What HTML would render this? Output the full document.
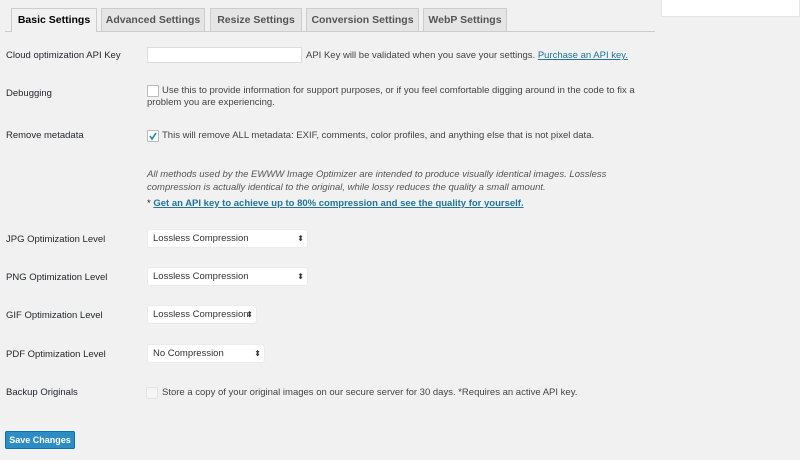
<!DOCTYPE html>
<html><head><style>
body{margin:0;width:800px;height:460px;background:#f1f1f1;font-family:"Liberation Sans",sans-serif;font-size:9.5px;color:#444;position:relative;overflow:hidden}
.a{position:absolute;white-space:nowrap}
.tab{position:absolute;top:8px;height:23px;box-sizing:border-box;border:1px solid #ccc;border-bottom:none;background:#e5e5e5;font-weight:bold;font-size:10.5px;color:#555;text-align:center;line-height:23px}
.tab.on{background:#f1f1f1;color:#000;height:24px}
.lbl{position:absolute;left:6px;font-size:9.5px;color:#23282d}
.sel{position:absolute;left:148px;height:17px;background:#fff;border-radius:2px;box-shadow:0 0 1px #ccc;box-sizing:border-box;padding-left:5px;line-height:18px;font-size:9.5px;color:#333}
.sel:after{content:"⬍";position:absolute;right:3px;top:0;font-size:8px;color:#333}
.cb{position:absolute;width:10px;height:10px;border:1px solid #bbb;background:#fff;border-radius:1px;left:147px}
</style></head><body>
<div class="a" style="left:661px;top:0;width:137px;height:16px;background:#fff;border:1px solid #e5e5e5;border-top:none"></div>
<div class="a" style="left:5px;top:31px;width:650px;height:1px;background:#ccc"></div>
<div class="tab on" style="left:11px;width:86px">Basic Settings</div>
<div class="tab" style="left:101px;width:104px">Advanced Settings</div>
<div class="tab" style="left:210px;width:92px">Resize Settings</div>
<div class="tab" style="left:306px;width:113px">Conversion Settings</div>
<div class="tab" style="left:423px;width:84px">WebP Settings</div>

<div class="lbl" style="top:50px">Cloud optimization API Key</div>
<div class="a" style="left:147px;top:47px;width:155px;height:16px;background:#fff;border:1px solid #ddd;box-sizing:border-box"></div>
<div class="a" style="left:306px;top:50px">API Key will be validated when you save your settings. <span style="color:#21759b;text-decoration:underline">Purchase an API key.</span></div>

<div class="lbl" style="top:88px">Debugging</div>
<div class="cb" style="top:85px"></div>
<div class="a" style="left:162px;top:85px">Use this to provide information for support purposes, or if you feel comfortable digging around in the code to fix a</div>
<div class="a" style="left:147px;top:97px">problem you are experiencing.</div>

<div class="lbl" style="top:130px">Remove metadata</div>
<div class="cb" style="top:130px"><svg width="10" height="10" style="position:absolute;left:0;top:0"><path d="M2 5 L4 8 L8 2" stroke="#1e8cbe" stroke-width="1.6" fill="none"/></svg></div>
<div class="a" style="left:162px;top:130px">This will remove ALL metadata: EXIF, comments, color profiles, and anything else that is not pixel data.</div>

<div class="a" style="left:147px;top:169px;font-style:italic;color:#555">All methods used by the EWWW Image Optimizer are intended to produce visually identical images. Lossless</div>
<div class="a" style="left:147px;top:182px;font-style:italic;color:#555">compression is actually identical to the original, while lossy reduces the quality a small amount.</div>
<div class="a" style="left:147px;top:198px;color:#222">* <b style="color:#21759b;text-decoration:underline">Get an API key to achieve up to 80% compression and see the quality for yourself.</b></div>

<div class="lbl" style="top:234px">JPG Optimization Level</div>
<div class="sel" style="top:230px;width:159px">Lossless Compression</div>
<div class="lbl" style="top:272px">PNG Optimization Level</div>
<div class="sel" style="top:268px;width:159px">Lossless Compression</div>
<div class="lbl" style="top:310px">GIF Optimization Level</div>
<div class="sel" style="top:306px;width:108px">Lossless Compression</div>
<div class="lbl" style="top:349px">PDF Optimization Level</div>
<div class="sel" style="top:345px;width:116px">No Compression</div>

<div class="lbl" style="top:387px">Backup Originals</div>
<div class="cb" style="top:387px;left:146px;border-color:#e3e3e3;background:#f5f5f5"></div>
<div class="a" style="left:162px;top:387px">Store a copy of your original images on our secure server for 30 days. *Requires an active API key.</div>

<div class="a" style="left:5px;top:431px;width:70px;height:18px;background:#2e8cc4;border:1px solid #0073aa;box-sizing:border-box;border-radius:2px;color:#fff;font-weight:bold;font-size:9px;text-align:center;line-height:16px">Save Changes</div>
</body></html>
